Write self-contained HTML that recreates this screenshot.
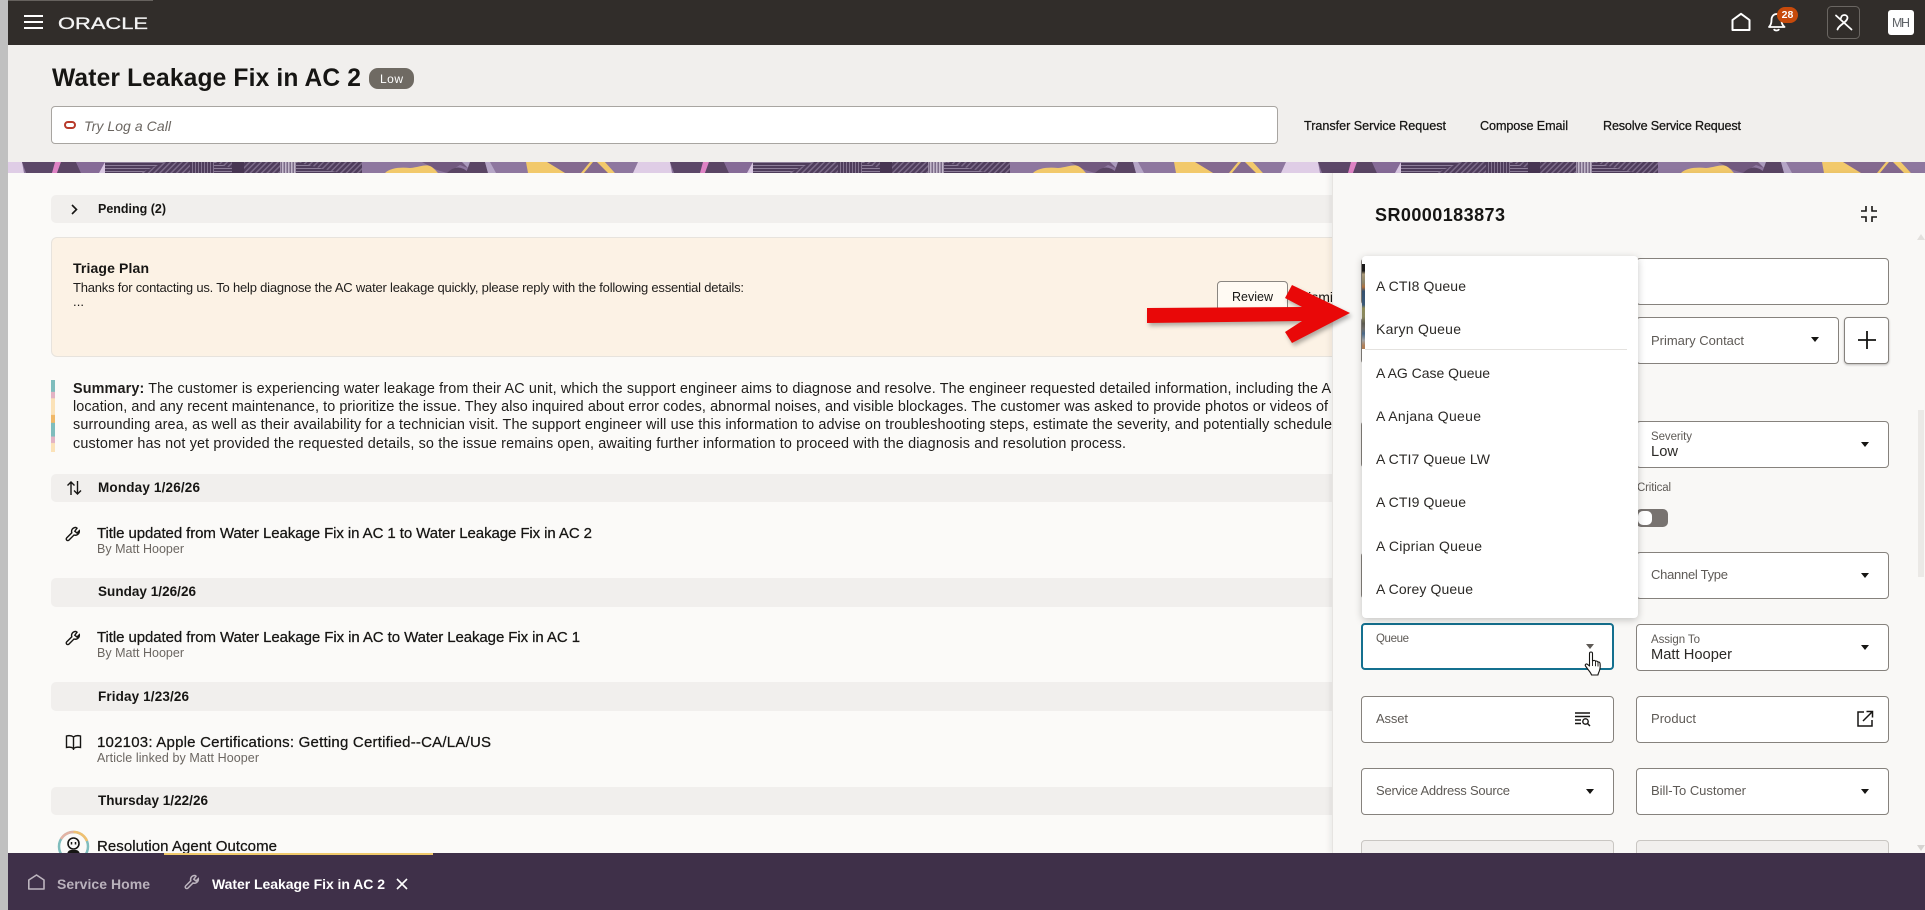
<!DOCTYPE html>
<html lang="en"><head><meta charset="utf-8"><title>Water Leakage Fix in AC 2</title>
<style>
html,body{margin:0;padding:0;width:1925px;height:910px;overflow:hidden;background:#fbfaf8;font-family:"Liberation Sans",Arial,sans-serif;color:#161513}
.a,.t,.f,svg.a{position:absolute}
.t{white-space:nowrap;line-height:20px;height:20px}
.m{-webkit-text-stroke:.25px}
.b{font-weight:700}
.f{background:#fff;border:1px solid #86827d;border-radius:4px;box-sizing:border-box}
.row{position:absolute;left:51px;width:1281px;height:28px;background:#f1efed;border-radius:5px 0 0 5px}
.l{font-size:13px;color:#5e5a56}
.s{font-size:11.5px;color:#5e5a56}
.d{font-size:13.5px;font-weight:700}
.h{font-size:15px}
.sub{font-size:12.5px;color:#6b6661}
.i{font-size:14px;color:#2b2926}
.act{font-size:12.6px}
.sm{font-size:14.4px;color:#1f1d1b}
</style></head><body>
<!-- gutter -->
<div class="a" style="left:0;top:0;width:8px;height:910px;background:#c0c0c0;z-index:30"></div>

<!-- top bar -->
<div class="a" style="left:8px;top:0;width:1917px;height:45px;background:#312d2a"></div>
<div class="a" style="left:8px;top:0;width:145px;height:1px;background:#66625e"></div>
<svg class="a" style="left:0;top:0" width="1925" height="45" fill="none">
<path d="M24 16h19M24 22h19M24 28h19" stroke="#fff" stroke-width="2"/>
<text x="58" y="29" font-size="17" fill="#f4f4f4" stroke="#f4f4f4" stroke-width=".3" textLength="90" lengthAdjust="spacingAndGlyphs" font-family="Liberation Sans, sans-serif">ORACLE</text>
<path d="M1732.500 30V20L1741 13.800 1749.500 20V30Z" stroke="#fff" stroke-width="2" stroke-linejoin="round"/>
<path d="M1769 27c2-2 2.500-4 2.500-7 0-3.500 2-6 5-6s5 2.500 5 6c0 3 .5 5 3 7zM1774 29c.5 2 4.500 2 5 0" stroke="#fff" stroke-width="1.800" stroke-linejoin="round"/>
<rect x="1827.500" y="6.500" width="32" height="32" rx="4" stroke="#6a6662"/>
<path d="M1836 15.500L1851.500 29.500M1837.500 29.500C1838.500 25 1847 22.500 1847.500 18C1847.500 14 1841.500 14 1841 18" stroke="#fff" stroke-width="1.800" stroke-linecap="round"/>
</svg>
<div class="a" style="left:1777px;top:7px;width:21px;height:16px;border-radius:8px;background:#c74a0b"></div>
<div class="t b" style="left:1777px;top:5px;width:21px;text-align:center;font-size:10.500px;color:#fff">28</div>
<div class="a" style="left:1888px;top:10px;width:26px;height:25px;background:#fff;border-radius:3px"></div>
<div class="t" data-w="18" style="left:1892px;top:13px;font-size:12.500px;color:#5f6368">MH</div>

<!-- page header -->
<div class="a" style="left:8px;top:45px;width:1917px;height:117px;background:#f1efed"></div>
<div class="t b" data-w="309" style="left:52px;top:69px;font-size:24.600px">Water Leakage Fix in AC 2</div>
<div class="a" style="left:369px;top:68px;width:45px;height:21px;border-radius:9px;background:#6f6a63"></div>
<div class="t" data-w="23" style="left:380px;top:69px;font-size:12px;color:#fff">Low</div>
<div class="a" style="left:51px;top:106px;width:1227px;height:38px;box-sizing:border-box;background:#fff;border:1px solid #a8a5a1;border-radius:4px"></div>
<div class="a" style="left:64px;top:121px;width:12px;height:8px;box-sizing:border-box;border:2px solid #b83a2a;border-radius:4px"></div>
<div class="t" data-w="87" style="left:84px;top:116px;font-size:14px;font-style:italic;color:#6b6661">Try Log a Call</div>
<div class="t act m" data-w="142" style="left:1304px;top:116px">Transfer Service Request</div>
<div class="t act m" data-w="88" style="left:1480px;top:116px">Compose Email</div>
<div class="t act m" data-w="138" style="left:1603px;top:116px">Resolve Service Request</div>

<!-- banner -->
<svg class="a" style="left:0;top:162px" width="1925" height="11">
<defs>
<pattern id="p1" width="4" height="4" patternUnits="userSpaceOnUse" patternTransform="rotate(-45)"><rect width="4" height="4" fill="#4e3c5b"/><rect width="4" height="1.500" fill="#7c6b89"/></pattern>
<pattern id="p2" width="3" height="3" patternUnits="userSpaceOnUse"><rect width="3" height="3" fill="#4e3c5b"/><rect width="3" height="1" fill="#8d7e99"/></pattern>
<pattern id="p3" width="3" height="3" patternUnits="userSpaceOnUse"><rect width="3" height="3" fill="#4e3c5b"/><rect width="1" height="3" fill="#83738f"/></pattern>
<pattern id="p4" width="3" height="3" patternUnits="userSpaceOnUse"><rect width="3" height="3" fill="#7c6c89"/><rect width="1.500" height="3" fill="#c4b9cc"/></pattern>
<g id="tile">
<polygon points="22,0 56,0 52,11 26,11" fill="#5c4768"/>
<polygon points="55,0 61,0 57,11 52,11" fill="#de82c4"/>
<polygon points="61,0 76,0 81,11 57,11" fill="#5a4564"/>
<polygon points="76,0 105,0 105,11 81,11" fill="#866b97"/>
<polygon points="105,0 105,11 99,11" fill="#d9c7e2"/>
<rect x="105" width="257" height="11" fill="url(#p1)"/>
<rect x="105" width="30" height="11" fill="url(#p2)"/>
<polygon points="135,0 165,0 140,11 135,11" fill="url(#p2)"/>
<rect x="190" width="24" height="11" fill="url(#p3)"/>
<polygon points="214,0 245,11 214,11" fill="url(#p2)"/>
<rect x="232" width="12" height="11" fill="#473552"/>
<rect x="280" width="16" height="11" fill="url(#p4)"/>
<polygon points="296,0 340,11 296,11" fill="url(#p2)"/>
<rect x="362" width="164" height="11" fill="#8e779f"/>
<polygon points="422,0 482,0 473,8 460,3 447,11 437,8" fill="#72597f"/>
<path d="M385 11C390 6 400 5 410 6C420 5 425 2 430 4C434 6 436 9 438 11Z" fill="#f2c96b"/>
<path d="M447 11Q458 0 469 11Z" fill="#5a4564"/>
<polygon points="462,0 473,0 469,7" fill="#ab9bbd"/>
<polygon points="470,0 485,0 488,11 466,11" fill="#5a4564"/>
<polygon points="485,0 490,0 496,11 488,11" fill="#b5a5c6"/>
<polygon points="547,0 598,0 615,11 565,11" fill="#84698f"/>
<polygon points="526,0 547,0 565,11 528,11" fill="#f2c96b"/>
<polygon points="590,0 593,0 584,11 581,11" fill="#f2c96b"/>
<polygon points="597,0 605,0 615,11 608,11" fill="#f2c96b"/>
<polygon points="605,0 638,0 633,11 615,11" fill="#8e779f"/>
<polygon points="638,0 670,0 672,11 633,11" fill="#dfcde6"/>
</g></defs>
<rect width="1925" height="11" fill="#8e779f"/>
<use href="#tile" x="-648"/><use href="#tile"/><use href="#tile" x="648"/><use href="#tile" x="1296"/>
</svg>

<!-- left content -->
<div class="row" style="top:195px"></div>
<svg class="a" style="left:70px;top:204px" width="9" height="11" fill="none"><path d="M2 1L6.500 5.500 2 10" stroke="#161513" stroke-width="1.600"/></svg>
<div class="t d" data-w="68" style="left:98px;top:199px;font-size:12.500px">Pending (2)</div>

<div class="a" style="left:51px;top:237px;width:1290px;height:120px;box-sizing:border-box;background:#fcf2e5;border:1px solid #e7e3dd;border-radius:6px"></div>
<div class="t b" data-w="76" style="left:73px;top:258px;font-size:14px">Triage Plan</div>
<div class="t" data-w="671" style="left:73px;top:278px;font-size:13px;color:#1f1d1b">Thanks for contacting us. To help diagnose the AC water leakage quickly, please reply with the following essential details:</div>
<div class="t" data-w="11" style="left:73px;top:292px;font-size:13px">...</div>
<div class="a" style="left:1217px;top:281px;width:71px;height:31px;box-sizing:border-box;background:#fffaf3;border:1px solid #8a8681;border-radius:4px"></div>
<div class="t act" data-w="41" style="left:1232px;top:287px;font-size:12.500px">Review</div>
<div class="t act" style="left:1298px;top:287px;font-size:14px">Dismiss</div>

<div class="a" style="left:51px;top:380px;width:4px;height:72px;background:linear-gradient(#7fbdbd 0,#7fbdbd 16%,#e3b3c4 17%,#e3b3c4 25%,#fbe2b8 26%,#fbe2b8 48%,#f0b868 49%,#f0b868 59%,#7fbdbd 60%,#7fbdbd 78%,#e3b3c4 79%,#e3b3c4 87%,#fbe2b8 88%)"></div>
<div class="t sm" data-w="1258" style="left:73px;top:379px"><b>Summary:</b> The customer is experiencing water leakage from their AC unit, which the support engineer aims to diagnose and resolve. The engineer requested detailed information, including the A</div>
<div class="t sm" data-w="1255" style="left:73px;top:397px">location, and any recent maintenance, to prioritize the issue. They also inquired about error codes, abnormal noises, and visible blockages. The customer was asked to provide photos or videos of</div>
<div class="t sm" data-w="1259" style="left:73px;top:415px">surrounding area, as well as their availability for a technician visit. The support engineer will use this information to advise on troubleshooting steps, estimate the severity, and potentially schedule</div>
<div class="t sm" data-w="1053" style="left:73px;top:434px">customer has not yet provided the requested details, so the issue remains open, awaiting further information to proceed with the diagnosis and resolution process.</div>

<div class="row" style="top:474px"></div>
<svg class="a" style="left:66px;top:480px" width="17" height="16" fill="none" stroke="#161513" stroke-width="1.400"><path d="M5 15V2M1.500 5.500L5 2l3.500 3.500M11.500 1v13M8 10.500L11.500 14l3.500-3.500"/></svg>
<div class="t d" data-w="102" style="left:98px;top:478px">Monday 1/26/26</div>

<svg class="a" style="left:65px;top:526px" width="17" height="16" fill="none" stroke="#161513" stroke-width="1.400"><path d="M11 1.500a4 4 0 0 0-4.200 5.300L1.700 11.900a1.500 1.500 0 0 0 2.200 2.200L9 9a4 4 0 0 0 5.300-4.300L12 7 9.800 5.200 12 2.200z"/></svg>
<div class="t h m" data-w="495" style="left:97px;top:524px">Title updated from Water Leakage Fix in AC 1 to Water Leakage Fix in AC 2</div>
<div class="t sub" data-w="87" style="left:97px;top:539px">By Matt Hooper</div>

<div class="row" style="top:578px;height:29px"></div>
<div class="t d" data-w="98" style="left:98px;top:582px">Sunday 1/26/26</div>
<svg class="a" style="left:65px;top:630px" width="17" height="16" fill="none" stroke="#161513" stroke-width="1.400"><path d="M11 1.500a4 4 0 0 0-4.200 5.300L1.700 11.900a1.500 1.500 0 0 0 2.200 2.200L9 9a4 4 0 0 0 5.300-4.300L12 7 9.800 5.200 12 2.200z"/></svg>
<div class="t h m" data-w="483" style="left:97px;top:628px">Title updated from Water Leakage Fix in AC to Water Leakage Fix in AC 1</div>
<div class="t sub" data-w="87" style="left:97px;top:643px">By Matt Hooper</div>

<div class="row" style="top:682px;height:29px"></div>
<div class="t d" data-w="91" style="left:98px;top:687px">Friday 1/23/26</div>
<svg class="a" style="left:65px;top:734px" width="17" height="17" fill="none" stroke="#161513" stroke-width="1.400"><path d="M8.500 3C6.500 1.500 3.500 1.500 1.500 2V13.500C3.500 13 6.500 13 8.500 14.500C10.500 13 13.500 13 15.500 13.500V2C13.500 1.500 10.500 1.500 8.500 3ZM8.500 3V16"/></svg>
<div class="t h m" data-w="394" style="left:97px;top:733px">102103: Apple Certifications: Getting Certified--CA/LA/US</div>
<div class="t sub" data-w="162" style="left:97px;top:748px">Article linked by Matt Hooper</div>

<div class="row" style="top:787px"></div>
<div class="t d" data-w="110" style="left:98px;top:791px">Thursday 1/22/26</div>
<svg class="a" style="left:57px;top:830px" width="33" height="33" fill="none">
<circle cx="16.500" cy="16.500" r="14.500" stroke="#7fbdbd" stroke-width="2.500"/>
<path d="M16.500 2A14.500 14.500 0 0 1 30 11" stroke="#f0c070" stroke-width="2.500"/>
<path d="M4 9A14.500 14.500 0 0 1 16.500 2" stroke="#e3b3a4" stroke-width="2.500"/>
<circle cx="16.500" cy="13.500" r="5.500" stroke="#161513" stroke-width="1.600"/>
<path d="M14.500 12v2.500M18.500 12v2.500" stroke="#161513" stroke-width="1.500"/>
<path d="M10 25c0-3 2-5 4-5h5c2 0 4 2 4 5z" fill="#161513"/>
</svg>
<div class="t h m" data-w="180" style="left:97px;top:837px">Resolution Agent Outcome</div>

<!-- right panel -->
<div class="a" style="left:1332px;top:173px;width:593px;height:680px;background:#f9f8f6;border-left:1px solid #e6e4e1;box-sizing:border-box;box-shadow:-3px 0 5px rgba(0,0,0,.06)"></div>
<div class="t b" data-w="130" style="left:1375px;top:205px;font-size:18px">SR0000183873</div>
<svg class="a" style="left:1860px;top:205px" width="18" height="18" fill="none" stroke="#161513" stroke-width="1.600"><path d="M6 1v5H1M12 1v5h5M6 17v-5H1M12 17v-5h5"/></svg>
<div class="a" style="left:1918px;top:410px;width:6px;height:167px;background:#ebe9e6"></div>
<svg class="a" style="left:1917px;top:234px" width="8" height="6"><path d="M0 6L4 0 8 6Z" fill="#e2e0dd"/></svg>
<svg class="a" style="left:1917px;top:845px" width="8" height="6"><path d="M0 0L4 6 8 0Z" fill="#d6d4d1"/></svg>

<div class="f" style="left:1361px;top:258px;width:253px;height:47px"></div>
<div class="f" style="left:1636px;top:258px;width:253px;height:47px"></div>
<div class="f" style="left:1361px;top:317px;width:253px;height:47px"></div>
<div class="f" style="left:1636px;top:317px;width:203px;height:47px"></div>
<div class="t l" data-w="93" style="left:1651px;top:331px">Primary Contact</div>
<div class="f" style="left:1844px;top:317px;width:45px;height:47px;box-shadow:0 1px 2px rgba(0,0,0,.25)"></div>
<svg class="a" style="left:1857px;top:330px" width="20" height="20" fill="none" stroke="#161513" stroke-width="1.800"><path d="M10 1v18M1 10h18"/></svg>

<div class="f" style="left:1361px;top:421px;width:253px;height:47px"></div>
<div class="f" style="left:1636px;top:421px;width:253px;height:47px"></div>
<div class="t s" data-w="41" style="left:1651px;top:427px">Severity</div>
<div class="t i" data-w="27" style="left:1651px;top:442px;font-size:14.700px">Low</div>
<div class="t s" data-w="34" style="left:1637px;top:478px">Critical</div>
<div class="a" style="left:1636px;top:509px;width:32px;height:18px;border-radius:5px;background:#787370"></div>
<div class="a" style="left:1638px;top:511px;width:14px;height:14px;border-radius:5px;background:#fff"></div>

<div class="f" style="left:1361px;top:552px;width:253px;height:47px"></div>
<div class="f" style="left:1636px;top:552px;width:253px;height:47px"></div>
<div class="t l" data-w="77" style="left:1651px;top:565px">Channel Type</div>

<div class="f" style="left:1361px;top:623px;width:253px;height:47px;border:2px solid #14708f"></div>
<div class="t s" data-w="33" style="left:1376px;top:629px">Queue</div>
<div class="f" style="left:1636px;top:624px;width:253px;height:47px"></div>
<div class="t s" data-w="49" style="left:1651px;top:630px">Assign To</div>
<div class="t i" data-w="81" style="left:1651px;top:645px;font-size:14.700px">Matt Hooper</div>

<div class="f" style="left:1361px;top:696px;width:253px;height:47px"></div>
<div class="t l" data-w="32" style="left:1376px;top:709px">Asset</div>
<svg class="a" style="left:1574px;top:711px" width="17" height="16" fill="none" stroke="#161513" stroke-width="1.400"><path d="M1 2h15M1 5.500h15M1 9h6M1 12.500h6"/><circle cx="11.500" cy="10.500" r="2.700"/><path d="M13.500 12.500L16 15"/></svg>
<div class="f" style="left:1636px;top:696px;width:253px;height:47px"></div>
<div class="t l" data-w="45" style="left:1651px;top:709px">Product</div>
<svg class="a" style="left:1856px;top:710px" width="18" height="18" fill="none" stroke="#161513" stroke-width="1.500"><path d="M8 2H2v14h14v-6M7 11L16 2M10.500 1.500h6v6"/></svg>

<div class="f" style="left:1361px;top:768px;width:253px;height:47px"></div>
<div class="t l" data-w="134" style="left:1376px;top:781px">Service Address Source</div>
<div class="f" style="left:1636px;top:768px;width:253px;height:47px"></div>
<div class="t l" data-w="95" style="left:1651px;top:781px">Bill-To Customer</div>

<div class="f" style="left:1361px;top:840px;width:253px;height:47px;background:#f1efed;border-color:#c9c6c2"></div>
<div class="f" style="left:1636px;top:840px;width:253px;height:47px;background:#f1efed;border-color:#c9c6c2"></div>

<svg class="a" style="left:1500px;top:300px" width="400" height="520" fill="#161513">
<path d="M311 37h8l-4 5zM361 142h8l-4 5zM361 273h8l-4 5zM361 345h8l-4 5zM86 489h8l-4 5zM361 489h8l-4 5z"/>
<path d="M86 344h8l-4 5z" fill="#5e5a56"/>
</svg>

<!-- bottom bar -->
<div class="a" style="left:8px;top:853px;width:1917px;height:57px;background:#3f3049;z-index:5"></div>
<div class="a" style="left:164px;top:853px;width:269px;height:2px;background:#f0c96b;z-index:6"></div>
<svg class="a" style="left:0;top:853px;z-index:6" width="420" height="57" fill="none">
<path d="M28.800 36V27L36.500 22 44 27V36Z" stroke="#bdb5bf" stroke-width="1.600" stroke-linejoin="round"/>
<g transform="translate(184 21.500)" stroke="#bdb5bf" stroke-width="1.500"><path d="M11 1a4 4 0 0 0-4.200 5.300L1.700 11.400a1.500 1.500 0 0 0 2.200 2.200L9 8.500a4 4 0 0 0 5.300-4.300L12 6.500 9.800 4.700 12 1.700z"/></g>
<path d="M397 26L407 36M407 26L397 36" stroke="#fff" stroke-width="1.600"/>
</svg>
<div class="t b" data-w="93" style="left:57px;top:874px;font-size:14px;color:#b9b1bc;z-index:6">Service Home</div>
<div class="t b" data-w="173" style="left:212px;top:874px;font-size:14px;color:#fff;z-index:6">Water Leakage Fix in AC 2</div>

<!-- dropdown -->
<div class="a" style="left:1362px;top:256px;width:276px;height:362px;background:#fff;border-radius:4px;box-shadow:0 2px 8px rgba(0,0,0,.22);z-index:10"></div>
<div class="a" style="left:1362px;top:264px;width:3px;height:85px;z-index:11;background:linear-gradient(#1a1a1a 0,#1a1a1a 8%,#a89878 12%,#8c8468 22%,#b0703c 27%,#34506e 32%,#3c5a78 48%,#8c8a58 52%,#8a8860 62%,#5c5a50 70%,#6e6c68 76%,#4a6a8a 82%,#a0a0a0 90%,#b08058 96%)"></div>
<div class="a" style="left:1365px;top:349px;width:262px;height:1px;background:#e4e2df;z-index:11"></div>
<div style="position:absolute;z-index:11;left:0;top:0">
<div class="t i" data-w="90" style="left:1376px;top:276px">A CTI8 Queue</div>
<div class="t i" data-w="85" style="left:1376px;top:319px">Karyn Queue</div>
<div class="t i" data-w="114" style="left:1376px;top:363px">A AG Case Queue</div>
<div class="t i" data-w="105" style="left:1376px;top:406px">A Anjana Queue</div>
<div class="t i" data-w="114" style="left:1376px;top:449px">A CTI7 Queue LW</div>
<div class="t i" data-w="90" style="left:1376px;top:492px">A CTI9 Queue</div>
<div class="t i" data-w="106" style="left:1376px;top:536px">A Ciprian Queue</div>
<div class="t i" data-w="97" style="left:1376px;top:579px">A Corey Queue</div>
</div>

<!-- hand cursor -->
<svg class="a" style="left:1584px;top:651px;z-index:12" width="20" height="26" viewBox="0 0 20 26"><path d="M5.500 2.500a1.500 1.500 0 0 1 3 0V10l1-.5c1-.3 1.800 0 2 .8 1-.5 2-.2 2.300.7 1-.3 2 .2 2.200 1.200.3 2 .3 5-.5 7.300-.6 2-1.500 3-1.500 4.500H7.500c-.5-2-2-3.500-3.500-5.500L1.500 15c-.8-1.300.5-2.500 1.800-1.800L5.500 15z" fill="#fff" stroke="#161513" stroke-width="1.100" stroke-linejoin="round"/><path d="M8.500 10v5M11.500 10.300v5M14 11v4.500" stroke="#161513" stroke-width=".9" fill="none"/></svg>

<!-- red arrow -->
<svg class="a" style="left:1130px;top:270px;z-index:13;filter:drop-shadow(2px 3px 2px rgba(0,0,0,.3))" width="240" height="90" viewBox="1130 270 240 90"><polygon points="1147,308 1302,307 1285,298 1292,285 1350,313 1292,343 1285,332 1302,321 1147,323" fill="#e90808"/></svg>

<script>
document.querySelectorAll('[data-w]').forEach(function(e){
  var w=+e.getAttribute('data-w'),n=e.textContent.length,m=e.getBoundingClientRect().width;
  if(n>1)e.style.letterSpacing=((w-m)/(n-1)).toFixed(3)+'px';
});
</script>
</body></html>
